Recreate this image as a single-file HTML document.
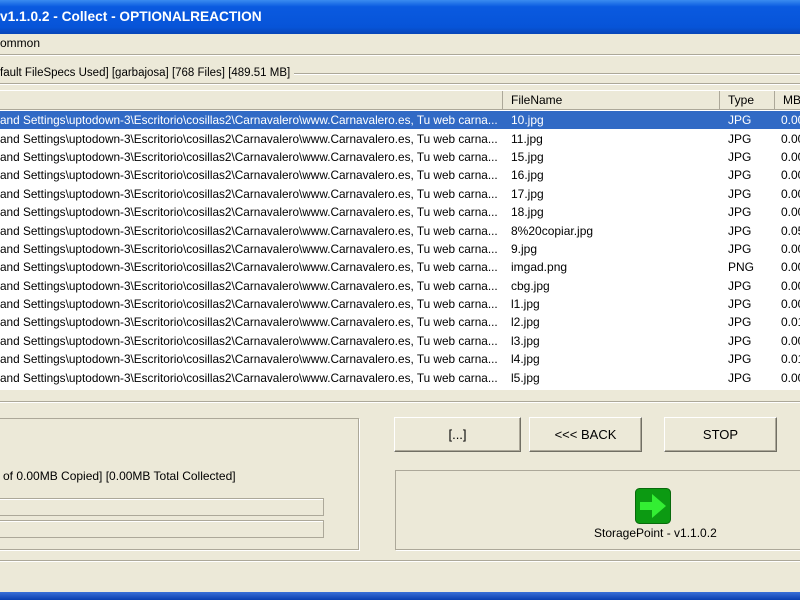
<!DOCTYPE html><html><head><style>
body{margin:0;width:800px;height:600px;overflow:hidden;background:#ece9d8;font-family:"Liberation Sans",sans-serif;font-size:12px;color:#000;position:relative}
.a{position:absolute}
.title{left:0;top:0;width:800px;height:34px;background:linear-gradient(#3a8cf0,#0a5ae0 20%,#0754d8 80%,#0846b8);color:#fff;font-weight:bold;font-size:13.7px}
.title span{position:absolute;left:0;top:9px}
.hl{height:0;border-top:1px solid #aca899;border-bottom:1px solid #fff}
table{border-collapse:collapse;table-layout:fixed}
td{height:18.4px;padding:0 0 0 8px;white-space:nowrap;overflow:hidden;line-height:18px}
.hdr div{position:absolute;top:91px;height:19px;line-height:19px;border-right:1px solid #aca899;border-bottom:1px solid #aca899;padding-left:8px;box-sizing:border-box;background:#ece9d8}
.btn{position:absolute;height:35px;border:1px solid #fff;border-right-color:#716f64;border-bottom-color:#716f64;box-shadow:inset -1px -1px #aca899;text-align:center;line-height:34px;box-sizing:border-box;font-size:13px}
.grp{position:absolute;border:1px solid #aca899;box-shadow:1px 1px #fff}
.bar{position:absolute;left:-2px;width:326px;height:18px;border:1px solid #aca899;box-shadow:inset 1px 1px #fff;box-sizing:border-box}
</style></head><body>
<div class="a title"><span>v1.1.0.2 - Collect - OPTIONALREACTION</span></div>
<div class="a" style="left:0;top:36px">ommon</div>
<div class="a hl" style="left:0;top:54px;width:800px"></div>
<div class="a hl" style="left:0;top:73px;width:800px"></div>
<div class="a" style="left:0;top:67px;background:#ece9d8;padding-right:4px;font-size:11.5px">fault FileSpecs Used] [garbajosa] [768 Files] [489.51 MB]</div>
<div class="a hl" style="left:0;top:83px;width:800px"></div>
<div class="a" style="left:0;top:90px;width:800px;height:300px;background:#fff"></div>
<div class="hdr"><div style="left:0;width:503px"></div><div style="left:503px;width:217px">FileName</div><div style="left:720px;width:55px">Type</div><div style="left:775px;width:30px">MB</div></div>
<table class="a" style="left:0;top:111px;width:810px">
<colgroup><col style="width:503px"><col style="width:217px"><col style="width:55px"><col style="width:35px"></colgroup>
<tbody id="t"></tbody></table>
<script>
var f=[["10.jpg","JPG","0.00"],["11.jpg","JPG","0.00"],["15.jpg","JPG","0.00"],["16.jpg","JPG","0.00"],["17.jpg","JPG","0.00"],["18.jpg","JPG","0.00"],["8%20copiar.jpg","JPG","0.05"],["9.jpg","JPG","0.00"],["imgad.png","PNG","0.00"],["cbg.jpg","JPG","0.00"],["l1.jpg","JPG","0.00"],["l2.jpg","JPG","0.01"],["l3.jpg","JPG","0.00"],["l4.jpg","JPG","0.01"],["l5.jpg","JPG","0.00"]];
var h="";f.forEach(function(r,i){h+='<tr style="'+(i==0?'background:#316ac5;color:#fff':'')+'"><td style="padding-left:0;font-size:11.8px">and Settings\\uptodown-3\\Escritorio\\cosillas2\\Carnavalero\\www.Carnavalero.es, Tu web carna...</td><td>'+r[0]+'</td><td>'+r[1]+'</td><td style="padding-left:6px">'+r[2]+'</td></tr>'});document.getElementById("t").innerHTML=h;
</script>
<div class="a hl" style="left:0;top:401px;width:800px"></div>
<div class="grp" style="left:-2px;top:418px;width:359px;height:130px"></div>
<div class="a" style="left:3px;top:469px">of 0.00MB Copied] [0.00MB Total Collected]</div>
<div class="bar" style="top:498px"></div><div class="bar" style="top:520px"></div>
<div class="btn" style="left:394px;top:417px;width:127px">[...]</div>
<div class="btn" style="left:529px;top:417px;width:113px">&lt;&lt;&lt; BACK</div>
<div class="btn" style="left:664px;top:417px;width:113px">STOP</div>
<div class="grp" style="left:395px;top:470px;width:410px;height:78px"></div>
<svg class="a" style="left:635px;top:488px" width="36" height="36" viewBox="0 0 36 36"><rect x="0.5" y="0.5" width="35" height="35" rx="4" fill="#0c9a12" stroke="#086a0c"/><path d="M5 14H17V6L31 18 17 30V22H5Z" fill="#33ee33"/></svg>
<div class="a" style="left:594px;top:526px">StoragePoint - v1.1.0.2</div>
<div class="a hl" style="left:0;top:560px;width:800px"></div>
<div class="a" style="left:0;top:592px;width:800px;height:8px;background:linear-gradient(#3a70d8,#0a3fb0)"></div>
</body></html>
